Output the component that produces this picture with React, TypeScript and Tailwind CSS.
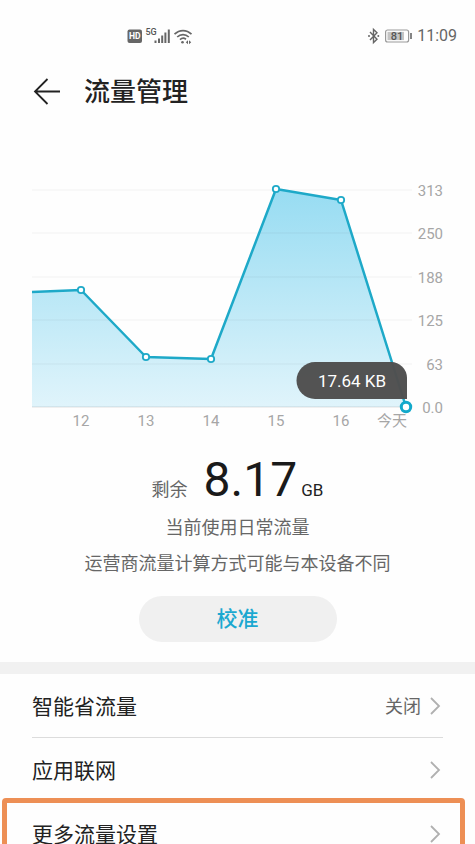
const days = [
  { label: "12", x: 49, y: 110 },
  { label: "13", x: 114, y: 177 },
  { label: "14", x: 179, y: 179 },
  { label: "15", x: 244, y: 9 },
  { label: "16", x: 309, y: 20 },
];

const gridLines = [
  { label: "313", y: 10 },
  { label: "250", y: 53 },
  { label: "188", y: 97 },
  { label: "125", y: 140 },
  { label: "63", y: 184 },
  { label: "0.0", y: 227 },
];

const settings = [
  { title: "智能省流量", value: "关闭" },
  { title: "应用联网" },
  { title: "更多流量设置", highlighted: true },
];

function StatusBar() {
  return (
    <div className="flex items-center justify-between pt-6 pr-[18px] pl-[127px] text-[#666]">
      <div className="flex items-center">
        <svg width="66" height="18" viewBox="0 0 66 18" fill="none" role="img" aria-label="信号">
          <rect x="0.5" y="2.5" width="14.5" height="13.5" rx="2" fill="#666" />
          <text x="7.8" y="12.4" textAnchor="middle" fontSize="8.5" fontWeight="700" fill="#fff">HD</text>
          <text x="18.5" y="7.5" fontSize="9" fontWeight="500" fontFamily="Liberation Sans Narrow, Roboto, sans-serif" fill="#555">5G</text>
          <path
            d="M28.5 13.4V16M32 11.4V16M35.2 8.6V16M38.4 5.6V16M41.8 2.4V16"
            stroke="#666"
            strokeWidth="2"
          />
          <path
            d="M47.5 7.2C52.5 2.4 59.5 2.4 64.5 7.2M50.2 10C53.6 6.7 58.4 6.7 61.8 10M53 12.7C54.8 11 57.2 11 59 12.2"
            stroke="#666"
            strokeWidth="1.7"
          />
          <circle cx="55.5" cy="15.2" r="1.3" fill="#666" />
          <path d="M61 13.2L58.8 15.2L61 17.2ZM62 13.2L64.2 15.2L62 17.2Z" fill="#666" />
        </svg>
      </div>
      <div className="flex items-center">
        <svg width="46" height="18" viewBox="0 0 46 18" fill="none" role="img" aria-label="蓝牙 电量">
          <path d="M3 5L10 12.2L6.5 15.6V2.4L10 5.8L3 13" stroke="#666" strokeWidth="1.4" />
          <circle cx="2" cy="9" r="1" fill="#666" />
          <circle cx="11.3" cy="9" r="1" fill="#666" />
          <rect x="18.6" y="3" width="23" height="12" rx="2" stroke="#999" strokeWidth="1.2" />
          <rect x="20.5" y="4.9" width="16.5" height="8.2" fill="#c4c4c4" />
          <text x="30" y="13" textAnchor="middle" fontSize="11" fontWeight="500" fill="#555">81</text>
          <path d="M44 6V12" stroke="#777" strokeWidth="1.8" />
        </svg>
        <span className="ml-1 text-base leading-6">11:09</span>
      </div>
    </div>
  );
}

function UsageChart() {
  const line = "0,112 " + days.map((d) => `${d.x},${d.y}`).join(" ") + " 374,227";

  return (
    <svg viewBox="0 0 411 250" className="block w-full" fontSize="15" role="img" aria-label="每日流量">
      <defs>
        <linearGradient id="usage" x1="0" y1="0" x2="0" y2="1">
          <stop offset="0" stopColor="#97dcf2" />
          <stop offset="1" stopColor="#e0f4fb" />
        </linearGradient>
      </defs>
      <polygon points={`0,227 ${line}`} fill="url(#usage)" />
      {gridLines.map((g) => (
        <g key={g.label}>
          <path d={`M0 ${g.y}H380`} stroke="#000" strokeOpacity={g.y === 227 ? 0.08 : 0.035} strokeWidth="1.5" />
          <text x="411" y={g.y + 6} textAnchor="end" fill="#a6a6a6">{g.label}</text>
        </g>
      ))}
      <polyline points={line} fill="none" stroke="#1ea9c8" strokeWidth="2.5" strokeLinejoin="round" />
      {days.map((d) => (
        <g key={d.label}>
          <circle cx={d.x} cy={d.y} r="3.2" fill="#fff" stroke="#1ea9c8" strokeWidth="1.8" />
          <text x={d.x} y="246" textAnchor="middle" fill="#a6a6a6">{d.label}</text>
        </g>
      ))}
      <text x="360" y="246" textAnchor="middle" fill="#a6a6a6">今天</text>

      {/* Selected day */}
      <path
        d="M283 182H359A16 16 0 0 1 375 198V219H283A18.5 18.5 0 0 1 283 182Z"
        fill="#505050"
        fillOpacity="0.98"
      />
      <text x="320" y="207" textAnchor="middle" fontSize="17" fill="#fff">17.64 KB</text>
      <circle cx="374" cy="227" r="4.7" fill="#fff" stroke="#12a9cb" strokeWidth="3" />
    </svg>
  );
}

function Chevron() {
  return (
    <svg width="14" height="18" viewBox="0 0 14 18" fill="none" aria-hidden="true">
      <path d="M2 1L10 9L2 17" stroke="#b0b0b0" strokeWidth="1.8" />
    </svg>
  );
}

export default function App() {
  return (
    <div className="h-screen overflow-hidden bg-[#fefefe] font-[Roboto,'Noto_Sans_CJK_SC',sans-serif] text-[#222]">
      <StatusBar />

      <header className="flex items-center gap-6 px-8 pt-6">
        <button type="button" aria-label="返回">
          <svg width="28" height="28" viewBox="0 0 28 28" fill="none">
            <path d="M28 13.5H3M15.5 1L3 13.5L15.5 26" stroke="#222" strokeWidth="1.8" />
          </svg>
        </button>
        <h1 className="text-[26px] leading-10 font-medium">流量管理</h1>
      </header>

      <main>
        <section className="px-8 pt-[68px]">
          <UsageChart />
        </section>

        <section className="flex flex-col items-center pt-[30px] pb-5 text-lg text-[#666]">
          <div className="flex items-baseline leading-10">
            <span className="mr-4">剩余</span>
            <span className="mr-1 text-5xl leading-10 text-[#1a1a1a]">8.17</span>
            <span className="text-[17px] text-[#222]">GB</span>
          </div>
          <p className="leading-9">当前使用日常流量</p>
          <p className="leading-9">运营商流量计算方式可能与本设备不同</p>
          <button
            type="button"
            className="mt-3.5 h-[46px] w-[198px] rounded-full bg-[#f0f0f0] text-[21px] font-medium text-[#1ba8d0]"
          >
            校准
          </button>
        </section>

        <div className="h-3 bg-[#f1f1f1]" />

        <ul>
          {settings.map((item) => (
            <li key={item.title} className="relative px-8">
              <a
                href="#"
                className={
                  item.value
                    ? "flex h-16 items-center justify-between border-b border-[#dcdcdc]"
                    : "flex h-16 items-center justify-between"
                }
              >
                <span className="pt-0.5 text-[21px] leading-8">{item.title}</span>
                <span className="flex items-center gap-2 text-lg text-[#666]">
                  {item.value && <span className="pt-0.5">{item.value}</span>}
                  <Chevron />
                </span>
              </a>
              {item.highlighted && (
                <div className="pointer-events-none absolute -top-1 right-[10px] -bottom-1 left-0.5 rounded-sm border-[5px] border-[#ed8f55]" />
              )}
            </li>
          ))}
        </ul>
      </main>
    </div>
  );
}
